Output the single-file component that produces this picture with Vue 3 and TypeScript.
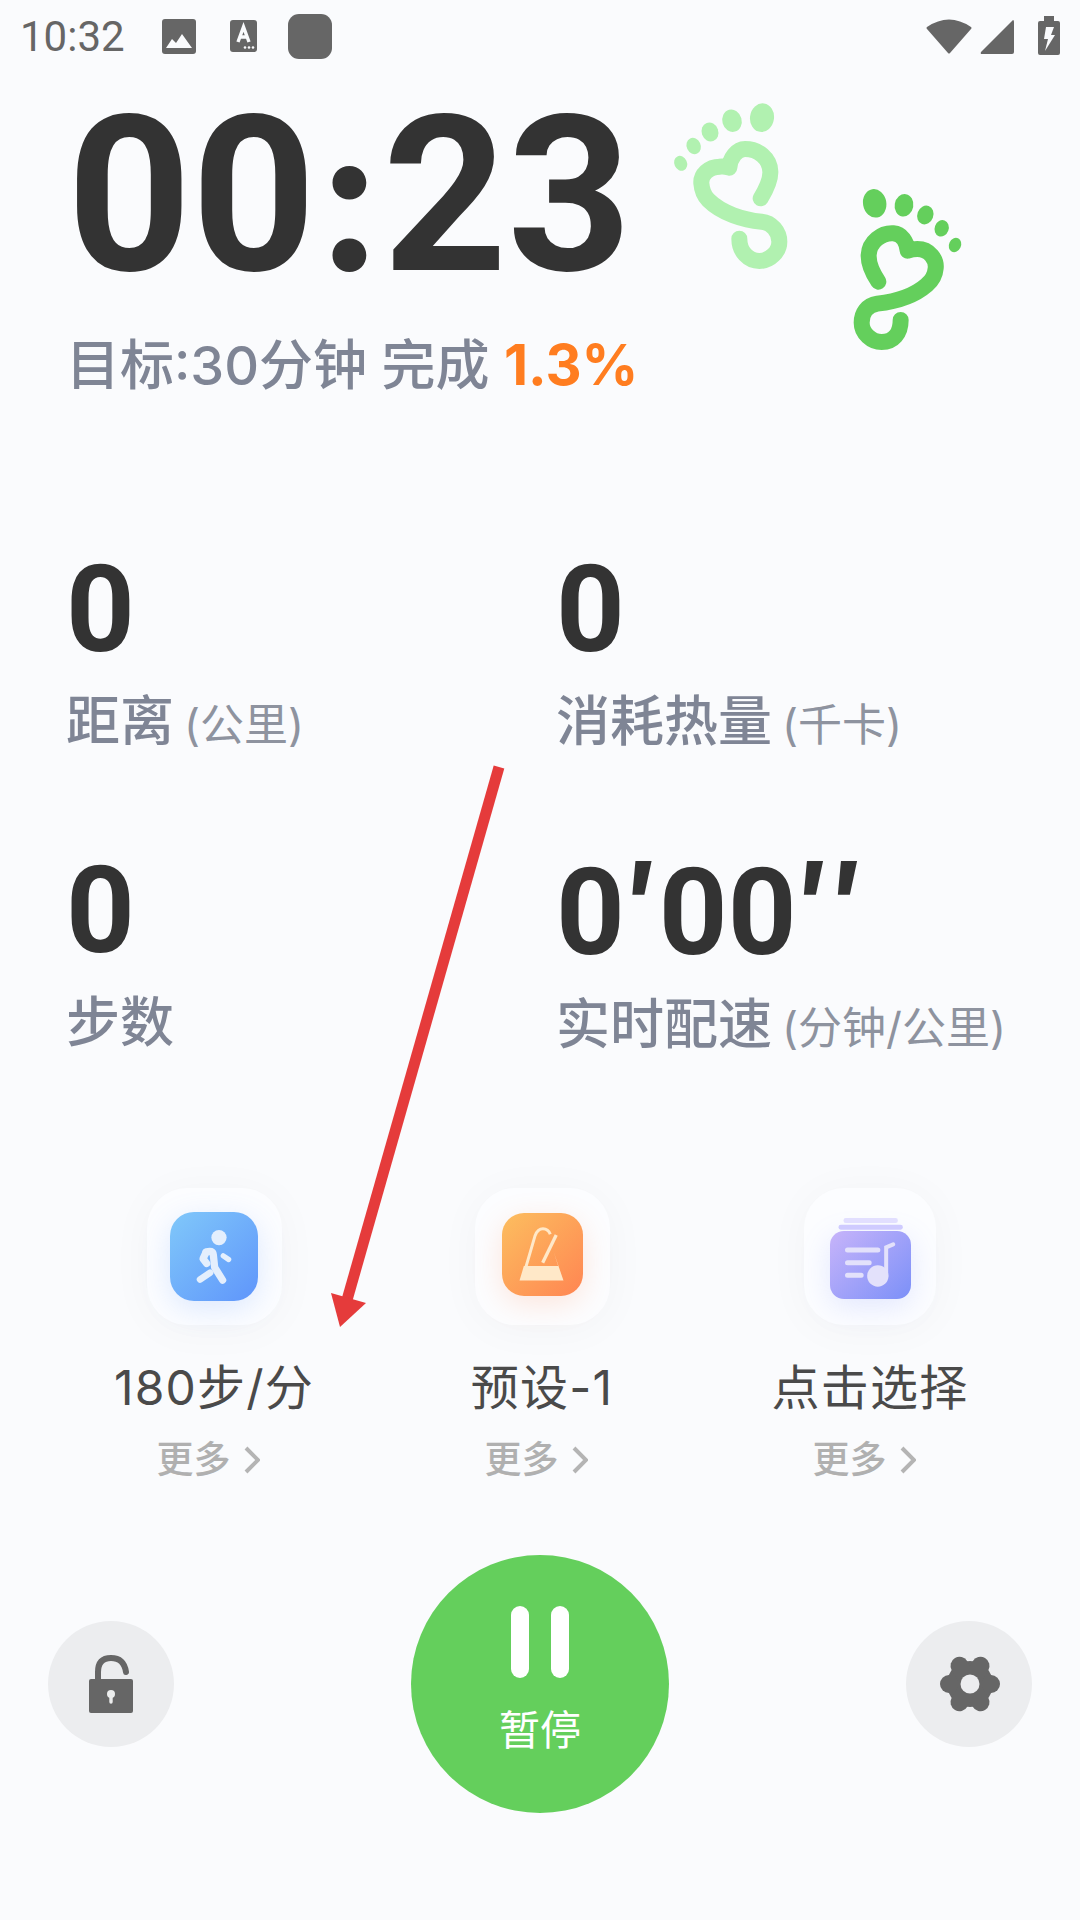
<script setup lang="ts">
interface Stat { value: string; primes?: boolean; label: string; unit?: string }
const stats: Stat[] = [
  { value: '0', label: '距离', unit: '(公里)' },
  { value: '0', label: '消耗热量', unit: '(千卡)' },
  { value: '0', label: '步数' },
  { value: '0', primes: true, label: '实时配速', unit: '(分钟/公里)' },
]
</script>

<template>
  <div class="page">
    <header class="status">
      <span class="time">10:32</span>
      <svg class="st-img" viewBox="0 0 34 35"><rect width="34" height="35" rx="3" fill="#666"/><path d="M4 29 L10 20 L14 24 L20 15 L30 29 Z" fill="#fafbfd"/></svg>
      <svg class="st-a" viewBox="0 0 27 32"><rect width="27" height="32" rx="3" fill="#666"/><path d="M8 22 L13.5 7 L19 22 M10 17 H17" fill="none" stroke="#fafbfd" stroke-width="3.4"/><circle cx="15" cy="27.5" r="1.3" fill="#fafbfd"/><circle cx="19" cy="27.5" r="1.3" fill="#fafbfd"/><circle cx="23" cy="27.5" r="1.3" fill="#fafbfd"/></svg>
      <span class="st-square"></span>
      <span class="st-spacer"></span>
      <svg class="st-wifi" viewBox="0 0 46 36"><path d="M1 9 Q23 -6 45 9 Q46 10 45 11 L24 35 Q23 36 22 35 L1 11 Q0 10 1 9 Z" fill="#666"/></svg>
      <svg class="st-signal" viewBox="0 0 34 34"><path d="M33 0 Q34 0 34 2 V32 Q34 34 32 34 H2 Q0 34 1 32 Z" fill="#666"/></svg>
      <svg class="st-batt" viewBox="0 0 22 39"><path d="M6 0 H16 V5 H20 Q22 5 22 7 V37 Q22 39 20 39 H2 Q0 39 0 37 V7 Q0 5 2 5 H6 Z" fill="#666"/><path d="M8 11 H16 L13 19 H17 L7 35 L10 23 H6 Z" fill="#fafbfd"/></svg>
    </header>

    <div class="timer">00<span class="colon">:</span>23</div>
    <div class="target">目标:30分钟 完成 <b>1.3%</b></div>

    <section class="stats">
      <div v-for="s in stats" :key="s.label" class="stat">
        <div class="stat-val">
          <template v-if="s.primes">0<span class="prime">′</span>00<span class="prime">′</span><span class="prime">′</span></template>
          <template v-else>{{ s.value }}</template>
        </div>
        <div class="stat-label">{{ s.label }}<span v-if="s.unit" class="unit">{{ s.unit }}</span></div>
      </div>
    </section>

    <section class="tools">
      <div class="tool">
        <div class="card">
          <div class="tile tile-blue">
            <svg viewBox="238 185 264 268">
              <circle cx="385" cy="262" r="23" fill="#e4effd"/>
              <g fill="none" stroke="#e4effd" stroke-linecap="round" stroke-linejoin="round">
                <path d="M346 306 Q366 298 368 314 L372 352 L396 390" stroke-width="22"/>
                <path d="M346 306 L337 326 L348 340" stroke-width="22"/>
                <path d="M328 388 L358 368" stroke-width="20"/>
                <path d="M398 317 L414 328" stroke-width="16"/>
              </g>
            </svg>
          </div>
        </div>
        <div class="tool-name">180步/分</div>
        <div class="more">更多<svg viewBox="0 0 16 28"><path d="M2 2 L14 14 L2 26" fill="none" stroke="#b4b4b4" stroke-width="4"/></svg></div>
      </div>
      <div class="tool">
        <div class="card">
          <div class="tile tile-orange">
            <svg viewBox="212 189 245 248">
              <path d="M284 352 L312 256 Q320 235 336 235 Q352 235 358 252" fill="none" stroke="#ffe8c8" stroke-width="9"/>
              <path d="M335 338 L376 254" fill="none" stroke="#ffe8c8" stroke-width="10"/>
              <path d="M368 304 L398 392 H265 L278 348 H382 Z" fill="#ffe8c8"/>
            </svg>
          </div>
        </div>
        <div class="tool-name">预设-1</div>
        <div class="more">更多<svg viewBox="0 0 16 28"><path d="M2 2 L14 14 L2 26" fill="none" stroke="#b4b4b4" stroke-width="4"/></svg></div>
      </div>
      <div class="tool">
        <div class="card card-narrow">
          <div class="tile tile-purple">
            <svg viewBox="263 243 242 204">
              <rect x="303" y="204" width="163" height="15" rx="7" fill="#e2dfff"/>
              <rect x="288" y="224" width="193" height="15" rx="7" fill="#cfcbff"/>
              <g fill="none" stroke="#e3e1fb" stroke-linecap="round">
                <path d="M315 300 H406 M315 338 H380 M315 376 H356" stroke-width="15"/>
                <path d="M431 380 V292 L452 283" stroke-width="12"/>
              </g>
              <circle cx="406" cy="378" r="32" fill="#e3e1fb"/>
            </svg>
          </div>
        </div>
        <div class="tool-name">点击选择</div>
        <div class="more">更多<svg viewBox="0 0 16 28"><path d="M2 2 L14 14 L2 26" fill="none" stroke="#b4b4b4" stroke-width="4"/></svg></div>
      </div>
    </section>

    <footer class="controls">
      <button class="round">
        <svg class="lock" viewBox="0 0 44 58">
          <path d="M9 26 V17 Q9 3 22 3 Q35 3 37 17" fill="none" stroke="#666" stroke-width="6" stroke-linecap="round"/>
          <rect y="24" width="44" height="34" rx="2" fill="#666"/>
          <circle cx="22" cy="39" r="4" fill="#eceded"/>
          <path d="M22 39 V47" stroke="#eceded" stroke-width="3.4" stroke-linecap="round"/>
        </svg>
      </button>
      <button class="pause">
        <span class="bars"><i></i><i></i></span>
        <span class="pause-text">暂停</span>
      </button>
      <button class="round">
        <svg class="gear" viewBox="-32 -32 64 64">
          <circle r="23" fill="#666"/>
          <g stroke="#666" stroke-width="18" stroke-linecap="round" stroke-linejoin="round">
            <path d="M-21 0 H21"/>
            <path d="M-10.5 -18.2 L10.5 18.2"/>
            <path d="M10.5 -18.2 L-10.5 18.2"/>
          </g>
          <circle r="9.5" fill="#ecedef"/>
        </svg>
      </button>
    </footer>

    <svg class="feet" viewBox="0 0 1320 1110">
      <g fill="#b1f1b0">
        <ellipse cx="366" cy="353" rx="36" ry="43" transform="rotate(8 366 353)"/>
        <ellipse cx="276" cy="362" rx="29" ry="34" transform="rotate(-15 276 362)"/>
        <ellipse cx="210" cy="396" rx="25" ry="29" transform="rotate(-20 210 396)"/>
        <ellipse cx="161" cy="438" rx="21" ry="25" transform="rotate(-25 161 438)"/>
        <ellipse cx="122" cy="490" rx="19" ry="23" transform="rotate(-25 122 490)"/>
      </g>
      <path d="M362 595 C380 565 392 540 391 515 C390 475 355 447 315 447 C290 447 270 475 268 503 C258 500 250 498 240 500 C205 500 182 525 184 550 C186 575 195 590 205 600 C245 640 310 660 365 665 C395 668 418 695 418 725 C418 755 390 783 358 783 C325 783 298 755 298 716" fill="none" stroke="#b1f1b0" stroke-width="48" stroke-linecap="round" stroke-linejoin="round"/>
      <g fill="#64cf5c">
        <ellipse cx="704" cy="610" rx="35" ry="43" transform="rotate(-10 704 610)"/>
        <ellipse cx="792" cy="616" rx="28" ry="34" transform="rotate(10 792 616)"/>
        <ellipse cx="856" cy="645" rx="24" ry="29" transform="rotate(20 856 645)"/>
        <ellipse cx="905" cy="685" rx="21" ry="25" transform="rotate(20 905 685)"/>
        <ellipse cx="945" cy="735" rx="18" ry="22" transform="rotate(25 945 735)"/>
      </g>
      <path d="M715 845 C695 815 685 790 686 765 C688 725 725 698 760 700 C785 702 800 725 803 752 C812 749 822 747 832 747 C870 747 890 780 887 805 C885 830 872 845 860 855 C820 890 765 905 712 911 C680 916 665 940 665 968 C665 1000 695 1026 725 1026 C760 1026 782 1000 782 960" fill="none" stroke="#64cf5c" stroke-width="48" stroke-linecap="round" stroke-linejoin="round"/>
    </svg>

    <svg class="arrow" viewBox="0 0 1080 1920">
      <path d="M499 767 L347 1300" stroke="#e53b3b" stroke-width="11" fill="none"/>
      <path d="M331 1293 L366 1303 L340 1327 Z" fill="#e53b3b"/>
    </svg>
  </div>
</template>

<style scoped>
.page {
  position: relative;
  width: 1080px;
  height: 1920px;
  overflow: hidden;
  background: #fafbfd;
  font-family: Inter, "Noto Sans CJK SC", sans-serif;
  display: flex;
  flex-direction: column;
}
.status {
  height: 72px;
  display: flex;
  align-items: center;
  padding: 0 20px;
  box-sizing: border-box;
}
.time {
  font-family: Roboto, sans-serif;
  font-size: 42px;
  line-height: 72px;
  color: #666;
  width: 142px;
  margin-top: 2px;
}
.st-img { width: 34px; height: 35px; }
.st-a { width: 27px; height: 32px; margin-left: 34px; }
.st-square {
  width: 44px;
  height: 45px;
  margin-left: 31px;
  background: #666;
  border-radius: 11px;
}
.st-spacer { flex: 1; }
.st-wifi { width: 46px; height: 36px; }
.st-signal { width: 34px; height: 34px; margin-left: 8px; margin-top: 2px; }
.st-batt { width: 22px; height: 39px; margin-left: 24px; margin-top: -2px; }

.timer {
  margin: 16px 0 0 67px;
  font-family: Roboto, sans-serif;
  font-size: 217px;
  line-height: 216px;
  font-weight: 700;
  color: #333;
}
.colon {
  font-family: Inter, sans-serif;
  font-size: 200px;
  line-height: 1;
}
.target {
  margin: 25px 0 0 66px;
  font-size: 54px;
  line-height: 72px;
  font-weight: 500;
  color: #7f8595;
}
.target b {
  font-size: 56px;
  font-weight: 700;
  color: #ff7d20;
}

.stats {
  margin: 148px 0 0 66px;
  display: grid;
  grid-template-columns: 490px 490px;
  row-gap: 90px;
}
.stat-val {
  font-family: Roboto, sans-serif;
  font-size: 120px;
  line-height: 120px;
  font-weight: 700;
  color: #333;
}
.prime {
  display: inline-block;
  width: 34px;
  text-align: center;
  position: relative;
  top: -6px;
  font-family: Inter, sans-serif;
  font-weight: 700;
}
.stat-label {
  margin-top: 16px;
  font-size: 54px;
  line-height: 72px;
  font-weight: 500;
  color: #7f8595;
  white-space: nowrap;
}
.unit {
  font-size: 44px;
  font-weight: 400;
  color: #8e939f;
  margin-left: 10px;
}

.tools {
  margin: 124px 0 0 50px;
  display: grid;
  grid-template-columns: repeat(3, 328px);
}
.tool {
  display: flex;
  flex-direction: column;
  align-items: center;
}
.card {
  width: 135px;
  height: 137px;
  border-radius: 40px;
  background: #fcfdff;
  box-shadow: 0 4px 44px rgba(0, 0, 0, 0.035);
  display: flex;
  align-items: center;
  justify-content: center;
}
.card-narrow { width: 132px; }
.tile svg { display: block; width: 100%; height: 100%; overflow: visible; }
.tile-blue {
  width: 88px;
  height: 89px;
  border-radius: 24px;
  background: linear-gradient(135deg, #80c8fa, #5f95fb);
  box-shadow: 0 8px 30px rgba(95, 149, 251, 0.2);
}
.tile-orange {
  width: 81px;
  height: 83px;
  margin-top: -4px;
  border-radius: 22px;
  background: linear-gradient(135deg, #fcbe5f, #ff8552);
  box-shadow: 0 8px 30px rgba(255, 133, 82, 0.2);
}
.tile-purple {
  width: 81px;
  height: 68px;
  margin-top: 17px;
  border-radius: 14px;
  background: linear-gradient(135deg, #c7b4fa, #7c90f8);
  box-shadow: 0 8px 30px rgba(124, 144, 248, 0.2);
}
.tool-name {
  margin-top: 33px;
  font-size: 48px;
  line-height: 60px;
  letter-spacing: 1.2px;
  color: #4a4a4a;
  white-space: nowrap;
}
.more {
  margin-top: 20px;
  padding-right: 12px;
  font-size: 37px;
  font-weight: 500;
  line-height: 44px;
  color: #b0b0b0;
  display: flex;
  align-items: center;
}
.more svg { width: 16px; height: 28px; margin-left: 13px; }

.controls {
  margin-top: 73px;
  padding: 0 48px;
  display: flex;
  align-items: center;
  justify-content: space-between;
}
button {
  border: 0;
  padding: 0;
  font-family: inherit;
  display: flex;
  align-items: center;
  justify-content: center;
}
.round {
  width: 126px;
  height: 126px;
  border-radius: 50%;
  background: #ecedef;
}
.lock { width: 44px; height: 58px; }
.gear { width: 64px; height: 64px; margin-left: 2px; }
.pause {
  width: 258px;
  height: 258px;
  border-radius: 50%;
  background: #64cf5c;
  flex-direction: column;
  justify-content: flex-start;
  padding-top: 51px;
  box-sizing: border-box;
}
.bars { display: flex; gap: 22px; }
.bars i {
  display: block;
  width: 18px;
  height: 72px;
  border-radius: 9px;
  background: #fff;
}
.pause-text {
  margin-top: 24px;
  font-size: 41px;
  line-height: 56px;
  color: #fff;
}

.feet {
  position: absolute;
  left: 640px;
  top: 0;
  width: 440px;
  height: 370px;
}
.arrow {
  position: absolute;
  left: 0;
  top: 0;
  width: 1080px;
  height: 1920px;
  pointer-events: none;
}
</style>
